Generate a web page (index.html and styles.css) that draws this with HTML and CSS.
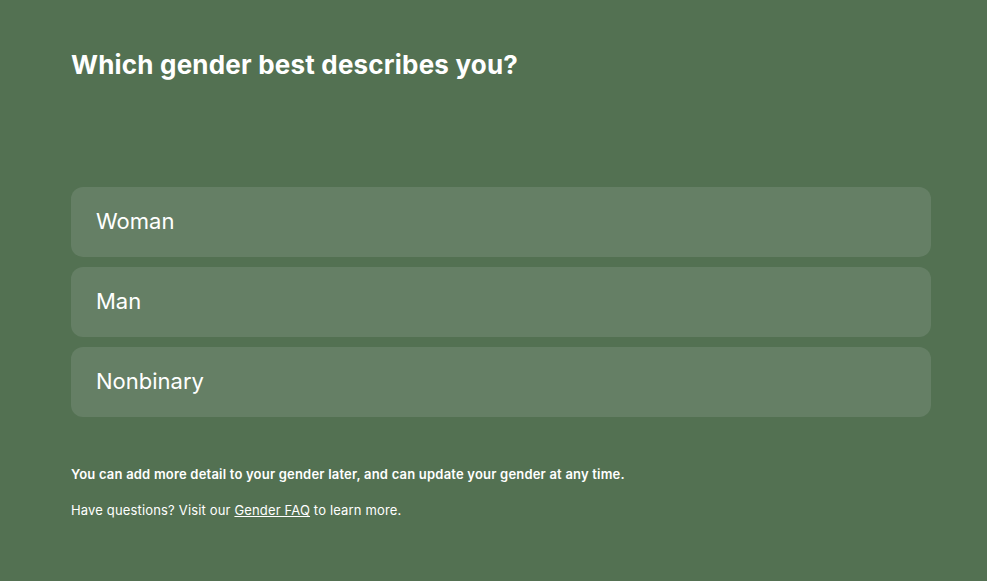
FILE: index.html
```html
<!DOCTYPE html>
<html lang="en">
<head>
    <meta charset="UTF-8">
    <meta name="viewport" content="width=device-width, initial-scale=1.0">
    <title>Gender</title>
    <link rel="stylesheet" href="styles.css">
</head>
<body>
    <div class="page">
        <h1 class="title">Which gender best describes you?</h1>
        <div class="options">
            <button type="button" class="option">Woman</button>
            <button type="button" class="option">Man</button>
            <button type="button" class="option">Nonbinary</button>
        </div>
        <p class="note">You can add more detail to your gender later, and can update your gender at any time.</p>
        <p class="help">Have questions? Visit our <a href="#">Gender FAQ</a> to learn more.</p>
    </div>
</body>
</html>
```

FILE: styles.css
```css
body {
    margin: 0;
    padding: 0;
    background-color: #537152;
    color: #ffffff;
    font-family: Inter, "Liberation Sans", sans-serif;
    height: 100vh;
}
.page {
    padding: 47px 56px 0 71px;
}
.title {
    margin: 0;
    font-size: 26px;
    font-weight: 700;
    letter-spacing: 0.2px;
    line-height: 36px;
}
.options {
    margin-top: 104px;
    display: flex;
    flex-direction: column;
    gap: 10px;
}
.option {
    box-sizing: border-box;
    height: 70px;
    padding: 0 25px 2px;
    border: none;
    border-radius: 12px;
    background-color: #657f65;
    color: #ffffff;
    font-family: inherit;
    font-size: 22px;
    text-align: left;
    cursor: pointer;
}
.note {
    margin: 47px 0 0;
    font-size: 13px;
    font-weight: 600;
    letter-spacing: 0.2px;
    line-height: 20px;
}
.help {
    margin: 16px 0 0;
    font-size: 13px;
    letter-spacing: 0.16px;
    line-height: 20px;
}
.help a {
    color: #ffffff;
}
```
